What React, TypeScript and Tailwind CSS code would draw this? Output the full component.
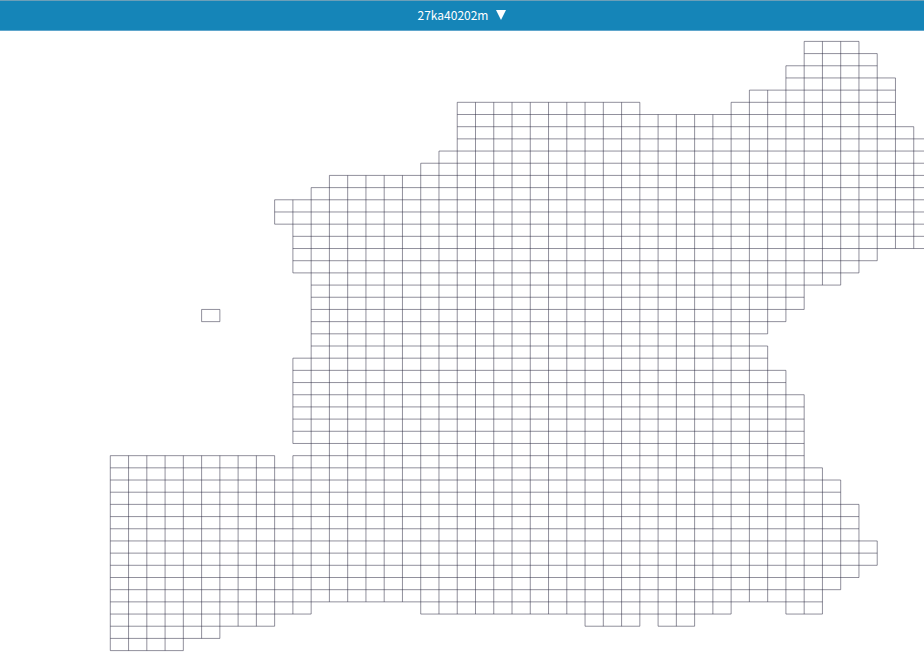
import { useMemo } from 'react'

const CELL_W = 18.26
const CELL_H = 12.184
const ORIGIN_X = 110.3
const ORIGIN_Y = 10.4

// [first column, end column) spans for each row of sheets, north to south
const rows: [number, number][][] = [
  [[38, 41]],
  [[38, 42]],
  [[37, 42]],
  [[37, 43]],
  [[35, 43]],
  [[19, 29], [34, 43]],
  [[19, 43]],
  [[19, 44]],
  [[19, 46]],
  [[18, 46]],
  [[17, 46]],
  [[12, 46]],
  [[11, 46]],
  [[9, 46]],
  [[9, 46]],
  [[10, 46]],
  [[10, 46]],
  [[10, 42]],
  [[10, 41]],
  [[11, 40]],
  [[11, 38]],
  [[11, 38]],
  [[5, 6], [11, 37]],
  [[11, 36]],
  [[11, 35]],
  [[11, 36]],
  [[10, 36]],
  [[10, 37]],
  [[10, 37]],
  [[10, 38]],
  [[10, 38]],
  [[10, 38]],
  [[10, 38]],
  [[11, 38]],
  [[0, 9], [10, 38]],
  [[0, 39]],
  [[0, 40]],
  [[0, 40]],
  [[0, 41]],
  [[0, 41]],
  [[0, 41]],
  [[0, 42]],
  [[0, 42]],
  [[0, 41]],
  [[0, 40]],
  [[0, 39]],
  [[0, 11], [17, 34], [37, 39]],
  [[0, 9], [26, 29], [30, 32]],
  [[0, 6]],
  [[0, 4]],
]

const COLS = 46

const x = (col: number) => (ORIGIN_X + col * CELL_W).toFixed(2)
const y = (row: number) => (ORIGIN_Y + row * CELL_H).toFixed(2)

function hasCell(row: number, col: number) {
  return (rows[row] ?? []).some(([start, end]) => col >= start && col < end)
}

// Shared edges are drawn once, joined into the longest possible runs
function buildHorizontals() {
  let d = ''
  for (let r = 0; r <= rows.length; r++) {
    let start = -1
    for (let c = 0; c <= COLS; c++) {
      const edge = hasCell(r, c) || hasCell(r - 1, c)
      if (edge && start < 0) start = c
      if (!edge && start >= 0) {
        d += `M${x(start)} ${y(r)}H${x(c)}`
        start = -1
      }
    }
  }
  return d
}

function buildVerticals() {
  let d = ''
  for (let c = 0; c <= COLS; c++) {
    let start = -1
    for (let r = 0; r <= rows.length; r++) {
      const edge = hasCell(r, c) || hasCell(r, c - 1)
      if (edge && start < 0) start = r
      if (!edge && start >= 0) {
        d += `M${x(c)} ${y(start)}V${y(r)}`
        start = -1
      }
    }
  }
  return d
}

function SheetMap() {
  const horizontals = useMemo(buildHorizontals, [])
  const verticals = useMemo(buildVerticals, [])

  return (
    <svg viewBox="0 0 924 629" className="block w-full h-auto" role="img">
      <g fill="none" stroke="#25233b" strokeOpacity="0.5" strokeWidth="1" shapeRendering="geometricPrecision">
        <path d={horizontals} />
        <path d={verticals} />
      </g>
    </svg>
  )
}

export default function App() {
  return (
    <div className="min-h-screen bg-white">
      <header className="flex h-[31px] items-center justify-center border-y border-t-[#6c9fb8] border-b-[#5fa6cc] bg-[#1585b8] pb-0.5">
        <button
          type="button"
          className="flex items-center gap-2 text-xs leading-5 text-white font-['Noto_Sans_CJK_JP',sans-serif]"
        >
          27ka40202m
          <svg viewBox="0 0 10 10" className="size-[10px]" aria-hidden="true">
            <path d="M0 0H10L5 10Z" fill="currentColor" />
          </svg>
        </button>
      </header>
      <main>
        <SheetMap />
      </main>
    </div>
  )
}
